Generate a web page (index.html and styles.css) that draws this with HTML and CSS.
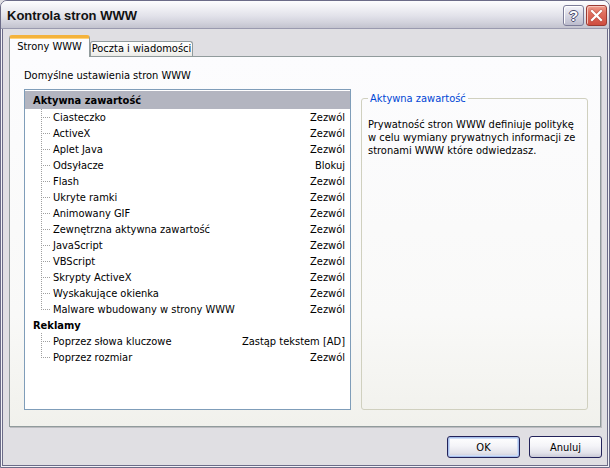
FILE: index.html
```html
<!DOCTYPE html>
<html lang="pl">
<head>
<meta charset="utf-8">
<title>Kontrola stron WWW</title>
<link rel="stylesheet" href="styles.css">
</head>
<body>
<div class="window">
  <div class="titlebar">
    <span class="title">Kontrola stron WWW</span>
    <div class="tb-buttons">
      <div class="tb-btn help"><span>?</span></div>
      <div class="tb-btn close">
        <svg width="19" height="19" viewBox="0 0 19 19">
          <path d="M5 5 L14 14 M14 5 L5 14" stroke="#8a3028" stroke-width="3.4" stroke-linecap="square" fill="none" opacity="0.35"/>
          <path d="M5 5 L14 14 M14 5 L5 14" stroke="#ffffff" stroke-width="2.2" stroke-linecap="square" fill="none"/>
        </svg>
      </div>
    </div>
  </div>
  <div class="client">
    <div class="tabs">
      <div class="tab active">Strony WWW</div>
      <div class="tab">Poczta i wiadomości</div>
    </div>
    <div class="panel">
      <div class="caption">Domyślne ustawienia stron WWW</div>
      <div class="content">
        <div class="list">
          <div class="row head selected"><span class="name">Aktywna zawartość</span></div>
          <div class="row child"><span class="branch"></span><span class="name">Ciasteczko</span><span class="val">Zezwól</span></div>
          <div class="row child"><span class="branch"></span><span class="name">ActiveX</span><span class="val">Zezwól</span></div>
          <div class="row child"><span class="branch"></span><span class="name">Aplet Java</span><span class="val">Zezwól</span></div>
          <div class="row child"><span class="branch"></span><span class="name">Odsyłacze</span><span class="val">Blokuj</span></div>
          <div class="row child"><span class="branch"></span><span class="name">Flash</span><span class="val">Zezwól</span></div>
          <div class="row child"><span class="branch"></span><span class="name">Ukryte ramki</span><span class="val">Zezwól</span></div>
          <div class="row child"><span class="branch"></span><span class="name">Animowany GIF</span><span class="val">Zezwól</span></div>
          <div class="row child"><span class="branch"></span><span class="name">Zewnętrzna aktywna zawartość</span><span class="val">Zezwól</span></div>
          <div class="row child"><span class="branch"></span><span class="name">JavaScript</span><span class="val">Zezwól</span></div>
          <div class="row child"><span class="branch"></span><span class="name">VBScript</span><span class="val">Zezwól</span></div>
          <div class="row child"><span class="branch"></span><span class="name">Skrypty ActiveX</span><span class="val">Zezwól</span></div>
          <div class="row child"><span class="branch"></span><span class="name">Wyskakujące okienka</span><span class="val">Zezwól</span></div>
          <div class="row child"><span class="branch last"></span><span class="name">Malware wbudowany w strony WWW</span><span class="val">Zezwól</span></div>
          <div class="row head"><span class="name">Reklamy</span></div>
          <div class="row child"><span class="branch"></span><span class="name">Poprzez słowa kluczowe</span><span class="val">Zastąp tekstem [AD]</span></div>
          <div class="row child"><span class="branch last"></span><span class="name">Poprzez rozmiar</span><span class="val">Zezwól</span></div>
        </div>
        <fieldset class="groupbox">
          <legend>Aktywna zawartość</legend>
          <p>Prywatność stron WWW definiuje politykę<br>w celu wymiany prywatnych informacji ze<br>stronami WWW które odwiedzasz.</p>
        </fieldset>
      </div>
    </div>
    <div class="buttons">
      <button class="btn default">OK</button>
      <button class="btn">Anuluj</button>
    </div>
  </div>
</div>
</body>
</html>
```

FILE: styles.css
```css
* { box-sizing: border-box; }

html, body {
  margin: 0;
  padding: 0;
  background: #e0dfe3;
}

body {
  font-family: "DejaVu Sans Condensed", "Liberation Sans", sans-serif;
  font-size: 11px;
  color: #000;
}

.window {
  width: 610px;
  height: 468px;
  display: flex;
  flex-direction: column;
  background: #f2f2f6;
  border: 1px solid #6c6c88;
  border-radius: 7px 7px 0 0;
  overflow: hidden;
}

.titlebar {
  flex: none;
  height: 28px;
  display: flex;
  align-items: center;
  justify-content: space-between;
  padding: 0 2px 0 6px;
  background: linear-gradient(to bottom, #fdfdfe 0%, #f1f1f5 25%, #e2e2ea 55%, #d2d2dc 80%, #c3c3cf 100%);
  border-bottom: 1px solid #9a9aaf;
}

.title {
  font-family: "Liberation Sans", sans-serif;
  font-weight: bold;
  font-size: 13px;
  color: #111;
  margin-top: 1px;
}

.tb-buttons {
  display: flex;
  gap: 2px;
  margin-top: 2px;
}

.tb-btn {
  width: 21px;
  height: 21px;
  border-radius: 3px;
  display: flex;
  align-items: center;
  justify-content: center;
}

.tb-btn.help {
  border: 1px solid #7c7c98;
  background: linear-gradient(to bottom, #f4f4fa 0%, #dcdce8 40%, #bcbccd 100%);
  box-shadow: inset 1px 1px 0 #ffffff;
}

.tb-btn.help span {
  font-family: "Liberation Sans", sans-serif;
  font-weight: bold;
  font-size: 15px;
  line-height: 15px;
  color: #ffffff;
  text-shadow: 1px 0 #4e4e6e, -1px 0 #4e4e6e, 0 1px #4e4e6e, 0 -1px #4e4e6e;
}

.tb-btn.close {
  border: 1px solid #9a3a32;
  background: linear-gradient(to bottom, #f0a090 0%, #e0705f 35%, #cf4d40 100%);
  box-shadow: inset 1px 1px 0 #f8c4b8;
}

.client {
  flex: 1;
  display: flex;
  flex-direction: column;
  margin: 0 1px 1px;
  border: 1px solid #6c6c88;
  border-top: none;
  background: #e0dfe3;
  padding: 6px 6px 0 6px;
}

.tabs {
  flex: none;
  height: 21px;
  display: flex;
  align-items: flex-end;
}

.tab {
  height: 15px;
  width: 103px;
  text-align: center;
  line-height: 14px;
  border: 1px solid #919b9c;
  border-bottom: none;
  border-radius: 3px 3px 0 0;
  background: linear-gradient(to bottom, #ffffff 0%, #f7f7f5 60%, #eaeae6 100%);
  white-space: nowrap;
}

.tab.active {
  width: 81px;
  height: 22px;
  margin-bottom: -1px;
  position: relative;
  z-index: 1;
  line-height: 22px;
  border-top: 3px solid #f4b33c;
  box-shadow: inset 0 1px 0 #ffd27a;
  background: #fcfcfe;
  line-height: 18px;
}

.panel {
  flex: none;
  height: 371px;
  display: flex;
  flex-direction: column;
  border: 1px solid #919b9c;
  background: linear-gradient(to bottom, #fcfcfe 0%, #f9f9f8 70%, #f1f1ec 100%);
  box-shadow: 1px 1px 0 #bcbcc0;
  padding: 12px 12px 16px 14px;
}

.caption {
  line-height: 14px;
  margin-bottom: 6px;
  padding-left: 0;
}

.content {
  flex: 1;
  display: flex;
  gap: 10px;
}

.list {
  width: 327px;
  border: 1px solid #7f9db9;
  background: #ffffff;
  padding-top: 1px;
}

.row {
  display: flex;
  align-items: center;
  height: 16px;
  padding-right: 5px;
  white-space: nowrap;
}

.row.head {
  font-weight: bold;
  padding-left: 8px;
  height: 16px;
}

.row.head.selected {
  height: 18px;
  background: #b3b5c0;
}

.row.child {
  padding-left: 16px;
}

.branch {
  flex: none;
  width: 9px;
  align-self: stretch;
  margin-right: 3px;
  background-image:
    repeating-linear-gradient(to bottom, #a0a0a0 0 1px, transparent 1px 2px),
    repeating-linear-gradient(to right, #a0a0a0 0 1px, transparent 1px 2px);
  background-size: 1px 100%, 9px 1px;
  background-position: 0 0, 0 8px;
  background-repeat: no-repeat;
}

.branch.last {
  background-size: 1px 9px, 9px 1px;
}

.val {
  margin-left: auto;
}

.groupbox {
  flex: 1;
  margin: 3px 0 0 0;
  padding: 0 6px;
  border: 1px solid #d0d0bf;
  border-radius: 3px;
  min-width: 0;
}

.groupbox legend {
  padding: 0 2px;
  color: #0046d5;
  line-height: 13px;
}

.groupbox p {
  margin: 13px 0 0 0;
  line-height: 13px;
  white-space: nowrap;
}

.buttons {
  flex: none;
  display: flex;
  justify-content: flex-end;
  gap: 9px;
  margin-top: 9px;
  margin-right: -1px;
}

.btn {
  width: 73px;
  height: 22px;
  padding: 0;
  font: inherit;
  color: #000;
  border: 1px solid #23235a;
  border-radius: 3px;
  background: linear-gradient(to bottom, #ffffff 0%, #f4f4f8 45%, #e2e2ea 80%, #c9c9d6 100%);
}

.btn.default {
  box-shadow: inset 0 0 0 1px #a8c0ec, inset 0 0 0 2px #cfdcf6;
}
```
